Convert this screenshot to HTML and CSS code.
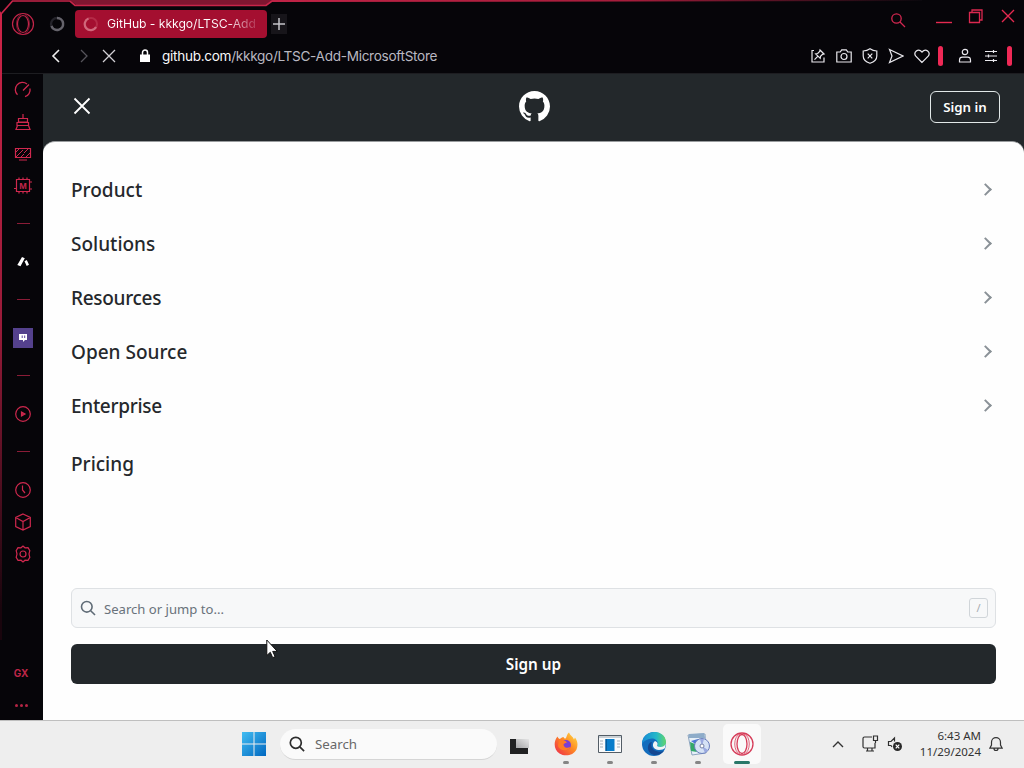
FILE: index.html
```html
<!DOCTYPE html>
<html lang="en">
<head>
<meta charset="utf-8">
<title>GitHub - kkkgo/LTSC-Add-MicrosoftStore</title>
<link rel="stylesheet" href="styles.css">
</head>
<body>
<div class="browser">
  <svg class="frame" width="1024" height="720" viewBox="0 0 1024 720">
    <defs>
      <linearGradient id="side" x1="0" y1="0" x2="0" y2="1"><stop offset="0" stop-color="#ce2448"/><stop offset=".5" stop-color="#981b39"/><stop offset=".95" stop-color="#19050d"/></linearGradient>
      <linearGradient id="top" x1="0" y1="0" x2="1" y2="0"><stop offset="0" stop-color="#c02346"/><stop offset=".55" stop-color="#a51d3b"/><stop offset="1" stop-color="#0a080d"/></linearGradient>
    </defs>
    <path d="M70 0h203l-6 5H76z" fill="#7f1630"/>
    <path d="M0 11v629h2V14z" fill="url(#side)"/>
    <path d="M1 14L12.500 1H70l5 4.500h191l6-4.500h32" fill="none" stroke="#c82549" stroke-width="1.700"/>
    <path d="M272 0h650v1l-650 1z" fill="url(#top)"/>
  </svg>
  <header class="chrome">
    <div class="tabs">
      <svg class="opera" width="24" height="24" viewBox="0 0 24 24"><g fill="none" stroke="#c4254a" stroke-width="1.200"><circle cx="12" cy="12" r="10.500"/><ellipse cx="12" cy="12" rx="5.500" ry="8.500"/><path d="M10 2.500c-6 3-6 16 0 19M14 2.500c6 3 6 16 0 19" stroke-width=".6"/></g></svg>
      <svg class="spinner" width="16" height="16" viewBox="0 0 16 16"><circle cx="8" cy="8" r="6" fill="none" stroke="#24232a" stroke-width="2.400"/><path d="M8 2a6 6 0 1 1-5.500 8" fill="none" stroke="#65636b" stroke-width="2.400"/></svg>
      <div class="tab">
        <svg width="16" height="16" viewBox="0 0 16 16"><circle cx="8" cy="8" r="6" fill="none" stroke="#b52a47" stroke-width="2"/><path d="M5.500 2.600A6 6 0 1 0 13 11" fill="none" stroke="#d0687c" stroke-width="2.200"/></svg>
        <span class="tab-title">GitHub - kkkgo/LTSC-Add</span>
      </div>
      <div class="new-tab"><svg width="14" height="14" viewBox="0 0 14 14"><path d="M7 1v12M1 7h12" stroke="#c5c4c9" stroke-width="1.500"/></svg></div>
      <div class="window-buttons">
        <svg class="find" width="16" height="16" viewBox="0 0 16 16"><g fill="none" stroke="#d32750" stroke-width="1.300"><circle cx="6.500" cy="6.500" r="4.700"/><path d="M10 10l5 5"/></g></svg>
        <svg class="min" width="16" height="16" viewBox="0 0 16 16"><path d="M0 12.500h16" stroke="#e52950" stroke-width="1.400"/></svg>
        <svg class="max" width="16" height="16" viewBox="0 0 16 16"><g fill="none" stroke="#db284f" stroke-width="1.300"><path d="M1.500 4.500h10v10h-10zM4 4V2h10v10h-2"/></g></svg>
        <svg class="close" width="14" height="14" viewBox="0 0 14 14"><path d="M1 1l12 12M13 1L1 13" stroke="#e52950" stroke-width="1.400"/></svg>
      </div>
    </div>
    <div class="address">
      <svg class="back" width="12" height="14" viewBox="0 0 12 14"><path d="M10 1L4 7l6 6" fill="none" stroke="#eee" stroke-width="1.600"/></svg>
      <svg class="forward" width="12" height="14" viewBox="0 0 12 14"><path d="M3 1l6 6-6 6" fill="none" stroke="#55545a" stroke-width="1.300"/></svg>
      <svg class="stop" width="14" height="14" viewBox="0 0 14 14"><path d="M1 1l12 12M13 1L1 13" stroke="#d2d1d5" stroke-width="1.300"/></svg>
      <svg class="lock" width="12" height="14" viewBox="0 0 12 14"><path d="M1 5.500h10V13H1z" fill="#fff"/><path d="M3.500 6V3.500a2.500 2.500 0 0 1 5 0V6" fill="none" stroke="#fff" stroke-width="1.500"/></svg>
      <span class="url"><b>github.com</b>/kkkgo/LTSC-Add-MicrosoftStore</span>
      <div class="tools">
        <svg width="16" height="16" viewBox="0 0 16 16"><path d="M4 2.500H2V14h12V9.500M10 2l4 4-1.500.3-2 2-.3 2-4.500-4.500 2-.3 2-2zM8 8.200L4.500 11.700"/></svg>
        <svg width="16" height="16" viewBox="0 0 16 16"><path d="M.8 4h3.400l1.500-2.200h4.600L11.800 4h3.400v10H.8z"/><circle cx="8" cy="8.500" r="3"/></svg>
        <svg width="16" height="16" viewBox="0 0 16 16"><path d="M8 .8C6 2.300 3.500 3 1.200 3v5c0 3.500 3 6 6.800 7.300C11.800 14 14.800 11.500 14.800 8V3C12.500 3 10 2.300 8 .8zM5.700 5.700l4.600 4.600M10.300 5.700l-4.600 4.600"/></svg>
        <svg width="16" height="16" viewBox="0 0 16 16"><path d="M1.500 1.500L15 8 1.500 14.500 4 8z"/></svg>
        <svg width="16" height="16" viewBox="0 0 16 16"><path d="M8 14.500L1.800 8.200C-1 4.500 4-.5 8 4c4-4.500 9 .5 6.200 4.200z"/></svg>
        <i class="bar bar-first"></i>
        <svg class="user" width="14" height="16" viewBox="0 0 14 16"><circle cx="7" cy="4" r="2.700"/><path d="M1.500 14V12c0-2 1-2.800 3-2.800h5c2 0 3 .8 3 2.800v2z"/></svg>
        <svg class="settings" width="14" height="16" viewBox="0 0 14 16"><path d="M1 3.500h12M1 8h12M1 12.500h12M9.500 2v3M4.500 6.500v3M9.500 11v3"/></svg>
        <i class="bar bar-last"></i>
      </div>
    </div>
  </header>
  <div class="main">
    <nav class="sidebar">
      <div class="item"><svg width="18" height="18" viewBox="0 0 18 18"><path d="M13 3A7.200 7.200 0 0 0 3.500 13.800M16 7.500A7.200 7.200 0 0 1 11 15.700M9 9.500l6-6" stroke-width="1.300"/></svg></div>
      <div class="item"><svg width="18" height="18" viewBox="0 0 18 18"><path d="M9 1v4M4.500 5.500h9V9h-9zM3 9.500h11.500v3H3zM3.500 12.500L2 16.500h14L14.500 12.500"/></svg></div>
      <div class="item"><svg width="18" height="18" viewBox="0 0 18 18"><path d="M1.500 3.500h15v9h-15zM5 15h8"/><path d="M2 7l3-3M2 12l3-3M5 9l4-4M7 12l3-3M10 8l4-4M12 12l4-4" stroke-width="1"/></svg></div>
      <div class="item"><svg width="20" height="18" viewBox="0 0 20 18"><path d="M3.500 2.500h13v12h-13zM6 .5v2M10 .5v2M14 .5v2M6 14.500v2M10 14.500v2M14 14.500v2M1 11.500h2.500M16.500 5H19M16.500 12H19"/><text x="10" y="12" class="mods">M</text></svg></div>
      <i class="dash"></i>
      <div class="item"><svg width="14" height="14" viewBox="0 0 14 14"><path d="M6 2l2.800 1.200-4.300 8L1.300 10zM8.500 6.300l2.300-1.200 2.200 4.600-2.300 1.300z" class="white"/></svg></div>
      <i class="dash"></i>
      <div class="item"><div class="twitch"><svg width="10" height="10" viewBox="0 0 10 10"><path d="M1 1h8v6H7L5 9V7H1z" class="white"/><path d="M4.200 2.500v2.500M6.700 2.500v2.500" class="eyes"/></svg></div></div>
      <i class="dash"></i>
      <div class="item"><svg width="18" height="18" viewBox="0 0 18 18"><circle cx="9" cy="9" r="7.300"/><path d="M7.500 7L11 9l-3.500 2z" fill="#b52545"/></svg></div>
      <i class="dash"></i>
      <div class="item"><svg width="18" height="18" viewBox="0 0 18 18"><circle cx="9" cy="9" r="7.300"/><path d="M8.500 4.500V9l2.500 3"/></svg></div>
      <div class="item"><svg width="18" height="18" viewBox="0 0 18 18"><path d="M9 1l7.300 3.500v9L9 17l-7.300-3.500v-9zM1.700 4.500L9 8.500l7.300-4M9 8.500V17"/></svg></div>
      <div class="item"><svg width="18" height="18" viewBox="0 0 18 18"><path d="M7 2.800L9 1l2 1.800 3-.2 1.800 3L15 9l.8 3.400-1.800 3-3-.2L9 17l-2-1.800-3 .2-1.800-3L3 9l-.8-3.400 1.800-3z"/><circle cx="9" cy="9" r="3"/></svg></div>
      <div class="side-bottom"><span class="gx">GX</span><span class="dots"><i></i><i></i><i></i></span></div>
    </nav>
    <main class="page">
      <div class="site-header">
        <svg class="menu-close" width="18" height="18" viewBox="0 0 18 18"><path d="M1.500 1.500l15 15M16.500 1.500l-15 15" stroke="#fff" stroke-width="1.800"/></svg>
        <svg class="octocat" width="31" height="31" viewBox="0 0 16 16"><path fill="#fff" d="M8 0c4.420 0 8 3.580 8 8a8.013 8.013 0 0 1-5.450 7.590c-.4.080-.55-.17-.55-.38 0-.27.010-1.130.010-2.200 0-.75-.25-1.230-.54-1.480 1.780-.2 3.650-.88 3.650-3.950 0-.88-.31-1.590-.82-2.150.08-.2.360-1.020-.08-2.120 0 0-.67-.22-2.200.82-.64-.18-1.320-.27-2-.27-.68 0-1.360.09-2 .27-1.530-1.030-2.200-.82-2.200-.82-.44 1.100-.16 1.920-.08 2.120-.51.560-.82 1.280-.82 2.150 0 3.060 1.860 3.750 3.640 3.950-.23.200-.44.550-.51 1.070-.46.210-1.610.55-2.330-.66-.15-.24-.6-.83-1.230-.82-.67.010-.27.380.010.530.34.190.73.900.82 1.130.16.450.68 1.310 2.690.94 0 .67.010 1.300.010 1.490 0 .21-.15.450-.55.380A7.995 7.995 0 0 1 0 8c0-4.420 3.580-8 8-8Z"/></svg>
        <a class="sign-in">Sign in</a>
      </div>
      <div class="sheet">
        <ul class="menu">
          <li><span>Product</span><i class="chevron"></i></li>
          <li><span>Solutions</span><i class="chevron"></i></li>
          <li><span class="tight">Resources</span><i class="chevron"></i></li>
          <li><span>Open Source</span><i class="chevron"></i></li>
          <li><span class="tight">Enterprise</span><i class="chevron"></i></li>
          <li class="pricing"><span>Pricing</span></li>
        </ul>
        <div class="search">
          <svg width="16" height="16" viewBox="0 0 16 16"><g fill="none" stroke="#5f6b76" stroke-width="1.600"><circle cx="6.800" cy="6.800" r="5.300"/><path d="M10.700 10.700l4.300 4.300"/></g></svg>
          <span>Search or jump to...</span><kbd>/</kbd>
        </div>
        <a class="sign-up">Sign up</a>
      </div>
    </main>
  </div>
  <svg class="cursor" width="12" height="20" viewBox="0 0 12 20"><path d="M.8 1v15.500l3.500-3.200 2.400 5.400 2.400-1.100-2.400-5.200h4.600z" fill="#fff" stroke="#111" stroke-width="1"/></svg>
</div>
<footer class="taskbar">
  <svg class="start" width="24" height="24" viewBox="0 0 24 24"><defs><linearGradient id="win" x1="0" y1="0" x2="1" y2="1"><stop offset="0" stop-color="#42bdf2"/><stop offset="1" stop-color="#0067c0"/></linearGradient></defs><path d="M0 0h11.500v11.500H0zM12.500 0H24v11.500H12.500zM0 12.500h11.500V24H0zM12.500 12.500H24V24H12.500z" fill="url(#win)"/></svg>
  <div class="task-search"><svg width="16" height="16" viewBox="0 0 16 16"><g fill="none" stroke="#2d2d2d" stroke-width="1.700"><circle cx="6.800" cy="6.800" r="5.500"/><path d="M10.800 10.800l4.300 4.300"/></g></svg><span>Search</span></div>
  <div class="apps">
    <div class="app"><svg width="24" height="24" viewBox="0 0 24 24"><defs><linearGradient id="desk" x1="0" y1="1" x2="1" y2="0"><stop offset="0" stop-color="#a5a6a8"/><stop offset="1" stop-color="#e6e6e6"/></linearGradient></defs><path d="M0 7h18v15H0z" fill="#202122"/><path d="M6 7h13v9H6z" fill="url(#desk)"/></svg></div>
    <div class="app"><svg width="24" height="24" viewBox="0 0 24 24"><defs><linearGradient id="fox" x1="1" y1="0" x2="0" y2="1"><stop offset="0" stop-color="#ffe448"/><stop offset=".45" stop-color="#ff8b24"/><stop offset="1" stop-color="#ec234e"/></linearGradient></defs><path d="M3.500 4.500C4 6 5 7 6 7c1-1 2-2 3.500-2 .5 1 1 1.500 2 1.500C13 5 12.500 2.500 15 .5c1 3 4 4 5 7l1-2c3 4 3 8 1.500 12-3 6-11.500 7.500-17 4S-1 10 3.500 4.500z" fill="url(#fox)"/><circle cx="12" cy="13" r="5" fill="#7a3ed4"/><path d="M5 8c3 0 6 0 8 2.500-2 .5-3.500 1-3.500 2.500 1 3 4 3.500 7 2-2 5-11 4-12.500-1z" fill="#ff7b25"/></svg><i class="run"></i></div>
    <div class="app"><svg width="24" height="24" viewBox="0 0 24 24"><path d="M.5 3.500h23v17H.5z" fill="#f9fafb" stroke="#535d66"/><path d="M1 4h22v2H1z" fill="#cad1d6"/><path d="M7.500 7h9v12h-9z" fill="#087dcb"/><path d="M7.500 7H9v12H7.500z" fill="#055c9c"/><path d="M2 9h3M2 12h3M2 15h3M19 9h3M19 12h3M19 15h3" stroke="#a5afb6"/></svg><i class="run"></i></div>
    <div class="app"><svg width="24" height="24" viewBox="0 0 24 24"><defs><linearGradient id="edge" x1="0" y1="0" x2="1" y2="0"><stop offset="0" stop-color="#168ad5"/><stop offset=".6" stop-color="#24b8c9"/><stop offset="1" stop-color="#61d66b"/></linearGradient></defs><circle cx="12" cy="12" r="12" fill="#126cbd"/><path d="M0 12C0-3 23-4 24 10c0 6-7 6-9 4 3-5-3-9-8-7-4 1-6 3-7 5z" fill="url(#edge)"/><path d="M10 10c-3 6 4 12 12 9-7 8-17 3-16-4 0-3 2-5 4-5z" fill="#154891"/><path d="M13 9c-4 3-2 9 4 9 3 0 5-1 6-2l1-5c-1 4-6 5-9 3 1-2 1-4-2-5z" fill="#f0f5f6"/></svg><i class="run"></i></div>
    <div class="app"><svg width="24" height="24" viewBox="0 0 24 24"><path d="M2 3l17-1 1 19-14 2z" fill="#e6eff8" stroke="#8da5bf"/><path d="M3 2l15-1 1 5H3z" fill="#8eacc9"/><path d="M4 10l5 2 2 8-6-1z" fill="#33a969"/><path d="M5 9l7-2-1 6z" fill="#4a77d7"/><circle cx="16" cy="14" r="7.500" fill="#d5e2f5" stroke="#6b7fbd"/><path d="M16 14l-2-7h4zM16 14l6 4-3 3z" fill="#9aa9e0"/><circle cx="16" cy="14" r="2" fill="#fff" stroke="#7481a5"/></svg><i class="run"></i></div>
    <div class="app active"><svg width="24" height="24" viewBox="0 0 24 24"><g fill="none" stroke="#d63c59" stroke-width="1.300"><circle cx="12" cy="12" r="11"/><ellipse cx="12" cy="12" rx="5" ry="9.500"/><path d="M10 2C3 4 3 20 10 22M14 2c7 2 7 18 0 20" stroke-width=".8"/></g></svg><i class="run"></i></div>
  </div>
  <div class="tray">
    <svg class="caret" width="12" height="8" viewBox="0 0 12 8"><path d="M1 7l5-5 5 5" fill="none" stroke="#333" stroke-width="1.400"/></svg>
    <svg class="network" width="18" height="18" viewBox="0 0 18 18"><g fill="none" stroke="#303030" stroke-width="1.200"><path d="M11 2H3.500Q2 2 2 3.500v8Q2 13 3.500 13H14V8M6.500 13v3M11 13v3M5 16h8M12.500 1h4v4.500h-4zM14.500 5.500V8"/></g></svg>
    <svg class="volume" width="16" height="16" viewBox="0 0 16 16"><path d="M5 11L4 9.500H1.500V5.500H4L7.500 2v3.500" fill="none" stroke="#303030" stroke-width="1.200"/><circle cx="10.500" cy="10.500" r="4.500" fill="#292929"/><path d="M8.700 8.700l3.600 3.600m0-3.600l-3.600 3.600" stroke="#fff" stroke-width="1.200"/></svg>
    <div class="clock"><span>6:43 AM</span><span>11/29/2024</span></div>
    <svg class="bell" width="14" height="16" viewBox="0 0 14 16"><path d="M2.500 9V6.200a4.500 4.500 0 0 1 9 0V9l1.700 3.200H.8zM5 12.500a2 2 0 0 0 4 0" fill="none" stroke="#333" stroke-width="1.200"/></svg>
  </div>
</footer>
</body>
</html>
```
FILE: styles.css
```css
* { box-sizing: border-box; }
html, body { margin: 0; width: 1024px; height: 768px; overflow: hidden; }
body { font-family: "Noto Sans", sans-serif; color: #25282c; }
svg { display: block; flex: none; }
.browser { position: relative; height: 720px; background: #060509; display: flex; flex-direction: column; }
.frame { position: absolute; left: 0; top: 0; pointer-events: none; }
.chrome { height: 74px; display: flex; flex-direction: column; font-family: Inter, sans-serif; border-bottom: 1px solid #1d1d21; }
.tabs { height: 38px; display: flex; align-items: center; padding: 10px 9px 0 11px; }
.spinner { margin-left: 14px; }
.tab { margin-left: 10px; width: 192px; height: 28px; border-radius: 4px; background: #a40f30; display: flex; align-items: center; padding: 0 8px; gap: 8px; }
.tab-title { white-space: nowrap; font-size: 12.200px; letter-spacing: -.05px; line-height: 18px; color: transparent; background: linear-gradient(90deg, #fff 0 80%, #b33553 100%); -webkit-background-clip: text; background-clip: text; }
.new-tab { margin-left: 4px; width: 16px; height: 20px; background: #17151a; display: grid; place-items: center; }
.window-buttons { margin: -16px 0 0 auto; display: flex; align-items: center; }
.find { margin: 8px 30px 0 0; }
.min { margin: 4px 16px 0 0; }
.max { margin-right: 17px; }
.address { height: 35px; display: flex; align-items: center; padding-left: 49px; }
.forward { margin-left: 17px; }
.stop { margin-left: 12px; }
.lock { margin-left: 23px; }
.url { margin-left: 11px; font-size: 13.600px; letter-spacing: -.3px; line-height: 20px; color: #b9b8c1; white-space: nowrap; }
.url b { font-weight: 400; color: #f8f8fa; }
.tools { margin-left: auto; padding-right: 12px; display: flex; align-items: center; gap: 10px; }
.tools svg { fill: none; stroke: #e9e8ed; stroke-width: 1.200; }
.bar { width: 5px; height: 20px; border-radius: 3px; background: #ef2956; }
.bar-first { margin-left: -2px; }
.tools .user { margin-left: 5px; }
.tools .settings { margin-left: 2px; margin-right: -1px; }
.main { height: 646px; display: flex; }
.sidebar { width: 43px; padding-left: 3px; display: flex; flex-direction: column; align-items: center; }
.item { height: 32px; flex: none; display: grid; place-items: center; }
.item svg { fill: none; stroke: #cf284e; stroke-width: 1.200; }
.item .white { fill: #fff; stroke: none; }
.item .eyes { stroke: #58409a; stroke-width: 1; }
.mods { font: 700 9px "Liberation Sans", sans-serif; text-anchor: middle; fill: #c5254a; stroke: none; }
.dash { height: 44px; width: 13px; flex: none; display: flex; align-items: center; padding-bottom: 1px; }
.dash::before { content: ""; width: 13px; height: 1px; background: #8a1c37; }
.twitch { width: 20px; height: 20px; background: #54418d; display: grid; place-items: center; }
.side-bottom { margin: auto 4px 13px 0; display: flex; flex-direction: column; align-items: center; gap: 23px; }
.gx { font: 700 10px/16px Inter, sans-serif; color: #bd2648; }
.dots { display: flex; gap: 2px; }
.dots i { width: 3px; height: 3px; border-radius: 50%; background: #b52545; }
.page { width: 981px; flex: none; background: #23282b; }
.site-header { height: 67px; display: grid; grid-template-columns: 1fr auto 1fr; align-items: center; padding: 0 24px 2px 30px; }
.menu-close { margin-bottom: 1px; }
.octocat { margin: 0 0 1px -5px; }
.sign-in { justify-self: end; width: 70px; height: 32px; border: 1px solid #e2e8e8; border-radius: 6px; color: #fff; font-size: 13.300px; font-weight: 600; line-height: 30px; text-align: center; }
.sheet { height: 579px; background: #fefefe; border-radius: 12px 12px 0 0; border-top: 1px solid #999c9e; padding: 21px 28px 0; display: flex; flex-direction: column; }
.menu { list-style: none; margin: 0; padding: 0; height: 425px; }
.menu li { height: 54px; display: flex; align-items: center; justify-content: space-between; padding-right: 6px; font-size: 19px; font-weight: 500; line-height: 28px; }
.menu .tight { letter-spacing: -.3px; }
.menu .pricing { margin-top: 4px; }
.chevron { width: 9px; height: 9px; border: solid #8a9197; border-width: 2px 2px 0 0; transform: rotate(45deg); margin-bottom: 2px; }
.search { height: 40px; flex: none; border: 1px solid #dee1e4; border-radius: 6px; background: #f7f8f9; display: flex; align-items: center; padding: 0 7px 0 8px; }
.search span { margin: 1px auto 0 8px; font-size: 13.100px; color: #69727b; }
.search kbd { width: 19px; height: 20px; border: 1px solid #d0d5d9; border-radius: 3px; color: #a5abb0; font: 11px/18px "Noto Sans", sans-serif; text-align: center; }
.sign-up { margin-top: 16px; height: 40px; flex: none; border-radius: 6px; background: #23282b; color: #fff; font-size: 15.300px; font-weight: 600; line-height: 41px; text-align: center; }
.cursor { position: absolute; left: 266px; top: 639px; }
.taskbar { height: 48px; background: #eee; border-top: 1px solid #bfbfbf; display: flex; align-items: center; padding: 0 21px 1px 242px; }
.task-search { width: 217px; height: 31px; margin-left: 14px; border-radius: 16px; background: #fafafa; border-bottom: 1px solid #d5d5d5; display: flex; align-items: center; padding-left: 9px; gap: 10px; font-size: 13.300px; color: #686868; }
.apps { margin-left: 6px; height: 47px; display: flex; gap: 6px; align-items: center; }
.app { width: 38px; height: 40px; border-radius: 5px; display: flex; flex-direction: column; align-items: center; padding-top: 8px; }
.active { background: #fafafa; }
.run { margin-top: 5px; width: 6px; height: 3px; border-radius: 2px; background: #858585; }
.active .run { width: 16px; background: #287768; }
.tray { margin-left: auto; display: flex; align-items: center; }
.network { margin-left: 17px; }
.volume { margin-left: 8px; }
.clock { margin-left: 16px; width: 62px; display: flex; flex-direction: column; align-items: flex-end; font-size: 11.500px; line-height: 16px; white-space: nowrap; color: #333; }
.bell { margin-left: 8px; }
```
